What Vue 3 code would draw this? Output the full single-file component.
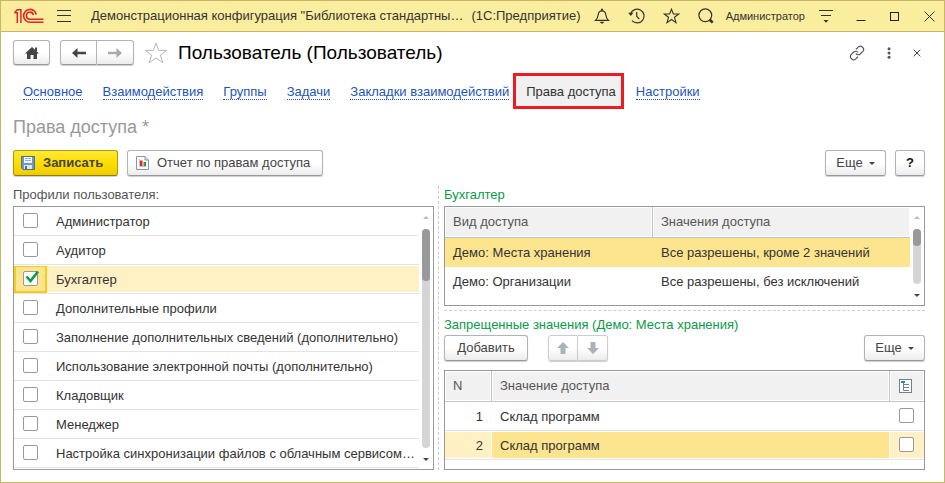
<script setup>
import { ref } from 'vue'

const links = ['Основное', 'Взаимодействия', 'Группы', 'Задачи', 'Закладки взаимодействий', 'Права доступа', 'Настройки']
const activeLink = ref('Права доступа')

const profiles = ref([
  { name: 'Администратор', on: false },
  { name: 'Аудитор', on: false },
  { name: 'Бухгалтер', on: true },
  { name: 'Дополнительные профили', on: false },
  { name: 'Заполнение дополнительных сведений (дополнительно)', on: false },
  { name: 'Использование электронной почты (дополнительно)', on: false },
  { name: 'Кладовщик', on: false },
  { name: 'Менеджер', on: false },
  { name: 'Настройка синхронизации файлов с облачным сервисом…', on: false },
])
const currentProfile = ref(2)

const kinds = [
  { kind: 'Демо: Места хранения', value: 'Все разрешены, кроме 2 значений' },
  { kind: 'Демо: Организации', value: 'Все разрешены, без исключений' },
]
const currentKind = ref(0)

const values = ref([
  { name: 'Склад программ', nested: false },
  { name: 'Склад программ', nested: false },
])
const currentValue = ref(1)
</script>

<template>
  <div class="window">
    <header class="titlebar">
      <svg class="logo" width="30" height="16" viewBox="0 0 30 16" fill="none" stroke="#e0242b">
        <path d="M.3 4.800H3.300V15M.8 4.300L3.300 1.800H6.900V15" stroke-width="1.500" />
        <path d="M22.300 6.500A6.400 6.400 0 1 0 16 14.200H29.500" stroke-width="1.600" />
        <path d="M19.300 7A3.500 3.500 0 1 0 16 11.200H29.500" stroke-width="1.600" />
      </svg>
      <button class="tool menu" aria-label="Меню">
        <svg width="14" height="12" viewBox="0 0 14 12" stroke="#333"><path d="M0 .5H14M0 5.500H14M0 11.500H14" /></svg>
      </button>
      <div class="caption"><span>Демонстрационная конфигурация "Библиотека стандартны…</span><span>(1С:Предприятие)</span></div>
      <div class="tools">
        <button class="tool" aria-label="Оповещения">
          <svg width="16" height="16" viewBox="0 0 16 16" fill="none" stroke="#333" stroke-width="1.200"><path d="M1.500 12.400C3.500 10.500 4 9 4.200 6.800C4.400 4.200 5.600 2.800 8 2.800S11.600 4.200 11.800 6.800C12 9 12.500 10.500 14.500 12.400Z" /><path d="M8 .8V2.800" stroke-width="2" /><path d="M5.500 13.800H10.500L8 16Z" fill="#333" stroke="none" /></svg>
        </button>
        <button class="tool" aria-label="История">
          <svg width="17" height="16" viewBox="0 0 17 16" fill="none" stroke="#333" stroke-width="1.200"><path d="M2.600 5.800A6.900 6.900 0 1 1 4 12.600" /><path d="M8.700 4V8.300L11.300 11" /><path d="M.2 4.800H5.400L2.800 8Z" fill="#333" stroke="none" /></svg>
        </button>
        <button class="tool" aria-label="Избранное">
          <svg width="17" height="16" viewBox="0 0 17 16" fill="none" stroke="#333" stroke-width="1.100"><path d="M8.500 1.200L10.400 6H15.700L11.500 9.300L13 14.600L8.500 11.500L4 14.600L5.500 9.300L1.300 6H6.600Z" /></svg>
        </button>
        <button class="tool" aria-label="Поиск">
          <svg width="16" height="16" viewBox="0 0 16 16" fill="none" stroke="#333" stroke-width="1.200"><circle cx="7.300" cy="7.300" r="6.400" /><path d="M11.500 11.500L14.700 14.700" stroke-width="2.600" /></svg>
        </button>
      </div>
      <span class="user">Администратор</span>
      <button class="tool service" aria-label="Сервис">
        <svg width="14" height="13" viewBox="0 0 14 13" stroke="#333" fill="none"><path d="M0 .5H14M2 5.500H12" stroke-width="1.200" /><path d="M4.500 10H9.500L7 12.700Z" fill="#333" stroke="none" /></svg>
      </button>
      <div class="system">
        <button class="tool" aria-label="Свернуть"><svg width="10" height="10" viewBox="0 0 10 10" stroke="#222"><path d="M.5 9.500H9.500" /></svg></button>
        <button class="tool" aria-label="Развернуть"><svg width="10" height="10" viewBox="0 0 10 10" stroke="#222" fill="none"><rect x=".5" y="1.500" width="8" height="8" /></svg></button>
        <button class="tool" aria-label="Закрыть"><svg width="11" height="11" viewBox="0 0 11 11" stroke="#333"><path d="M.5 .5L10.500 10.500M10.500 .5L.5 10.500" /></svg></button>
      </div>
    </header>

    <main class="form">
      <div class="head">
        <button class="btn home" aria-label="Домой">
          <svg width="16" height="14" viewBox="0 0 16 14" fill="#444"><path d="M8 1L15 7.500H13V13H9.500V9H6.500V13H3V7.500H1Z" /><path d="M11 1.500H13V5H11Z" /></svg>
        </button>
        <div class="pair">
          <button class="btn" aria-label="Назад"><svg width="14" height="12" viewBox="0 0 14 12" fill="#444"><path d="M0 6L5.500 1V4.700H14V7.300H5.500V11Z" /></svg></button>
          <button class="btn" aria-label="Вперед"><svg width="14" height="12" viewBox="0 0 14 12" fill="#aaa"><path d="M14 6L8.500 1V4.700H0V7.300H8.500V11Z" /></svg></button>
        </div>
        <button class="tool star" aria-label="В избранное">
          <svg width="24" height="22" viewBox="0 0 24 22" fill="none" stroke="#b4b8bc"><path d="M12 1.200L14.700 8.400H22.700L16.400 13L18.800 20.700L12 16L5.200 20.700L7.600 13L1.300 8.400H9.300Z" /></svg>
        </button>
        <h1>Пользователь (Пользователь)</h1>
        <div class="head-tools">
          <button class="tool" aria-label="Ссылка"><svg width="16" height="16" viewBox="0 0 16 16" fill="none" stroke="#555" stroke-width="1.200"><path d="M7 4.300L9.500 1.900C12 -.3 16.300 3.600 13.900 6.300L11.200 9C9.800 10.300 7.800 9.800 6.800 8.600" /><path d="M9 11.700L6.500 14.100C4 16.300 -.3 12.400 2.100 9.700L4.800 7C6.200 5.700 8.200 6.200 9.200 7.400" /></svg></button>
          <button class="tool" aria-label="Действия"><svg width="4" height="12" viewBox="0 0 4 12" fill="#555"><circle cx="2" cy="1.700" r="1.500" /><circle cx="2" cy="6" r="1.500" /><circle cx="2" cy="10.300" r="1.500" /></svg></button>
          <button class="tool" aria-label="Закрыть форму"><svg width="8" height="8" viewBox="0 0 8 8" stroke="#444"><path d="M.7 .7L7.300 7.300M7.300 .7L.7 7.300" /></svg></button>
        </div>
      </div>

      <nav class="links">
        <a v-for="l in links" :key="l" href="#" :class="{ active: l === activeLink }" @click.prevent="activeLink = l"><span>{{ l }}</span></a>
      </nav>

      <h2>Права доступа *</h2>

      <div class="commands">
        <button class="btn save">
          <svg width="14" height="14" viewBox="0 0 14 14"><path d="M.5 .5H13.500V13.500H2L.5 12Z" fill="#6d97c6" stroke="#4a6f98" /><path d="M3 1H11V7H3Z" fill="#f4f8fc" /><path d="M4 2.500H10M4 4.500H10" stroke="#9ab2ca" /><path d="M3 9H11V13H3Z" fill="#dfe8f0" /><path d="M4 10H6V13H4Z" fill="#4a6f98" /></svg>
          <span>Записать</span>
        </button>
        <button class="btn report">
          <svg width="13" height="14" viewBox="0 0 13 14"><path d="M.5 .5H9L12.500 4V13.500H.5Z" fill="#fff" stroke="#8296a6" /><path d="M9 .5V4H12.500" fill="#dfe6eb" stroke="#8296a6" /><path d="M3.500 3V10.500H10.500" stroke="#b8c3cb" fill="none" /><path d="M4 4.500H6.500V10H4Z" fill="#e22" /><path d="M7.500 6H10V10H7.500Z" fill="#26a03c" /></svg>
          <span>Отчет по правам доступа</span>
        </button>
        <button class="btn more">Еще<i class="caret"></i></button>
        <button class="btn help">?</button>
      </div>

      <div class="columns">
        <section class="left">
          <h3 class="plain">Профили пользователя:</h3>
          <div class="box">
            <table class="profiles">
              <tbody>
                <tr v-for="(p, i) in profiles" :key="p.name" :class="{ current: i === currentProfile }" @click="currentProfile = i">
                  <td class="tick">
                    <span class="check">
                      <input :id="'profile' + i" v-model="p.on" type="checkbox">
                      <svg v-if="p.on" width="15" height="14" viewBox="0 0 15 14" fill="none" stroke="#0a9a48" stroke-width="2.600"><path d="M1.500 6.500L5.500 11L13 1.500" /></svg>
                    </span>
                  </td>
                  <td><label :for="'profile' + i">{{ p.name }}</label></td>
                </tr>
              </tbody>
            </table>
            <div class="scroll long"><i class="up"></i><div class="track"><div class="thumb"></div></div><i class="down"></i></div>
          </div>
        </section>

        <section class="right">
          <h3>Бухгалтер</h3>
          <div class="box kinds-box">
            <table class="grid kinds">
              <thead><tr><th>Вид доступа</th><th>Значения доступа</th></tr></thead>
              <tbody>
                <tr v-for="(k, i) in kinds" :key="k.kind" :class="{ current: i === currentKind }" @click="currentKind = i">
                  <td>{{ k.kind }}</td><td>{{ k.value }}</td>
                </tr>
              </tbody>
            </table>
            <div class="scroll short"><i class="up"></i><div class="track"><div class="thumb"></div></div><i class="down"></i></div>
          </div>

          <div class="denied">
            <h3>Запрещенные значения (Демо: Места хранения)</h3>
            <div class="commands sub">
              <button class="btn add">Добавить</button>
              <div class="pair dim">
                <button class="btn" aria-label="Вверх"><svg width="12" height="12" viewBox="0 0 12 12" fill="#a9b4ba"><path d="M6 0L12 6H8.500V12H3.500V6H0Z" /></svg></button>
                <button class="btn" aria-label="Вниз"><svg width="12" height="12" viewBox="0 0 12 12" fill="#a9b4ba"><path d="M6 12L12 6H8.500V0H3.500V6H0Z" /></svg></button>
              </div>
              <button class="btn more">Еще<i class="caret"></i></button>
            </div>
            <div class="box">
              <table class="grid values">
                <thead>
                  <tr>
                    <th>N</th><th>Значение доступа</th>
                    <th aria-label="Включая подчиненные"><svg width="13" height="14" viewBox="0 0 13 14" fill="none"><rect x=".5" y=".5" width="12" height="13" fill="#fff" stroke="#70808c" /><path d="M2 2H6V4H2Z" fill="#2f86c6" /><path d="M4.500 4V11.500H10M4.500 8.500H10M4.500 5.500H10" stroke="#70808c" /></svg></th>
                  </tr>
                </thead>
                <tbody>
                  <tr v-for="(v, i) in values" :key="i" :class="{ current: i === currentValue }" @click="currentValue = i">
                    <td>{{ i + 1 }}</td><td>{{ v.name }}</td>
                    <td><span class="check"><input v-model="v.nested" type="checkbox" :aria-label="'Включая подчиненные, строка ' + (i + 1)"></span></td>
                  </tr>
                </tbody>
              </table>
            </div>
          </div>
        </section>
      </div>
    </main>
  </div>
</template>

<style>
body {
  margin: 0;
  background: #fff;
}
</style>

<style scoped>
* {
  box-sizing: border-box;
}
.window {
  min-height: 100vh;
  border: 1px solid #c9b765;
  background: #fff;
  color: #333;
  font: 13px/16px "Liberation Sans", Arial, sans-serif;
}
button {
  font: inherit;
  color: #444;
}
svg {
  display: block;
  flex: none;
}
h1, h2, h3 {
  margin: 0;
  font-weight: normal;
}

/* Title bar */
.titlebar {
  display: flex;
  align-items: center;
  height: 31px;
  padding: 0 9px 0 13px;
  border-bottom: 1px solid #c9b765;
  background: #fbed9e;
}
.tool {
  display: flex;
  align-items: center;
  justify-content: center;
  padding: 0;
  border: 0;
  background: none;
}
.menu {
  margin: 0 20px 0 13px;
}
.caption {
  display: flex;
  flex: 1;
  gap: 8px;
  white-space: nowrap;
  overflow: hidden;
}
.tools {
  display: flex;
  gap: 18px;
}
.user {
  margin: 0 14px 0 12px;
  font-size: 11px;
}
.service {
  margin-right: 23px;
}
.system {
  display: flex;
  gap: 24px;
}

/* Form header */
.form {
  padding: 8px 19px 12px 12px;
}
.head {
  display: flex;
  align-items: center;
  height: 25px;
}
.btn {
  display: flex;
  align-items: center;
  justify-content: center;
  height: 26px;
  padding: 0;
  border: 1px solid #b3b3b3;
  border-bottom-color: #999;
  border-radius: 3px;
  background: linear-gradient(#fff 50%, #ececec);
  box-shadow: 0 1px 1px #ccc;
  white-space: nowrap;
}
.head .btn {
  height: 25px;
}
.home {
  width: 37px;
  margin-right: 10px;
}
.pair {
  display: flex;
}
.pair .btn {
  width: 37px;
}
.pair .btn:first-child {
  border-radius: 3px 0 0 3px;
}
.pair .btn:last-child {
  border-left: 0;
  border-radius: 0 3px 3px 0;
}
.star {
  margin: 0 10px;
}
h1 {
  color: #000;
  font-size: 19px;
  line-height: 24px;
}
.head-tools {
  display: flex;
  align-items: center;
  gap: 22px;
  margin-left: auto;
  padding-right: 4px;
}

/* Navigation links */
.links {
  display: flex;
  align-items: center;
  height: 36px;
  margin-top: 8px;
  white-space: nowrap;
}
.links a {
  padding: 2px 10px 0;
  color: #1d55b8;
  text-decoration: none;
}
.links a span {
  display: block;
  line-height: 14px;
  border-bottom: 1px dotted #1d55b8;
}
.links a.active {
  display: flex;
  align-items: center;
  height: 36px;
  margin-left: -6px;
  margin-right: 2px;
  padding: 2px 5px 0 10px;
  border: 3px solid #ed1c24;
  background: #f0f0f0;
  color: #333;
}
.links a.active span {
  border-bottom-color: transparent;
}
h2 {
  margin-top: 6px;
  color: #999;
  font-size: 18px;
  line-height: 24px;
}

/* Command bars */
.commands {
  display: flex;
  gap: 9px;
  margin-top: 11px;
}
.save, .report {
  gap: 8px;
  justify-content: flex-start;
}
.save {
  width: 105px;
  padding-left: 7px;
  border-color: #b39b00;
  border-bottom-color: #8f7c00;
  background: linear-gradient(#ffe93b, #ffde00 50%, #efcc00);
  font-weight: bold;
}
.report {
  width: 196px;
  padding-left: 8px;
}
.more {
  width: 61px;
  gap: 6px;
  margin-left: auto;
}
.caret {
  border: 3px solid transparent;
  border-top-color: #444;
  border-bottom: 0;
}
.help {
  width: 30px;
  color: #111;
  font-weight: bold;
}

/* Columns */
.columns {
  display: grid;
  grid-template-columns: 421fr 481fr;
  gap: 10px;
  margin-top: 10px;
}
.left, .right {
  position: relative;
  min-width: 0;
  display: flex;
  flex-direction: column;
}
.left::after {
  content: "";
  position: absolute;
  top: 0;
  right: -5px;
  bottom: 0;
  border-right: 1px dashed #ccc;
}
h3 {
  height: 20px;
  color: #0a9a48;
  font-size: 13px;
  line-height: 18px;
}
h3.plain {
  color: #555;
}
.box {
  display: flex;
  border: 1px solid #999;
  background: #fff;
}
.left .box {
  height: 264px;
}
.kinds-box, .denied .box {
  height: 100px;
}
table {
  flex: 1;
  align-self: flex-start;
  min-width: 0;
  table-layout: fixed;
  width: 100%;
  border-collapse: separate;
  border-spacing: 0;
}
td, th {
  padding: 0;
  height: 29px;
  font-weight: normal;
  text-align: left;
  white-space: nowrap;
  overflow: hidden;
  border-bottom: 1px solid #e3e3e3;
}
.profiles td {
  padding-top: 1px;
  padding-left: 9px;
}
.profiles .tick {
  width: 33px;
  padding-top: 0;
  padding-bottom: 1px;
}
.profiles .current td {
  background: #fff1c4;
  background-clip: padding-box;
  box-shadow: inset 0 1px #fff, inset 0 -1px #fff;
}
.profiles .current .tick {
  background: #fde48f;
  box-shadow: inset 0 1px #fff, inset 0 0 0 2px #fbc91b;
}
.check {
  position: relative;
  display: block;
  width: 15px;
  height: 15px;
}
.check input {
  display: block;
  appearance: none;
  width: 15px;
  height: 15px;
  margin: 0;
  border: 1px solid #999;
  border-radius: 2px;
  background: #fff;
}
.check svg {
  position: absolute;
  left: 2px;
  top: -1px;
}

/* Tables with a header */
.grid th {
  height: 31px;
  padding-left: 8px;
  border-bottom: 1px solid #c4c4c4;
  border-right: 1px solid #c4c4c4;
  background: #f1f1f1;
  box-shadow: inset 0 0 0 1px #fff;
  color: #555;
}
.grid th:last-child {
  border-right: 0;
}
.grid td {
  padding-left: 8px;
  border-right: 1px solid #fff;
}
.grid td:last-child {
  border-right: 0;
}
.kinds th:first-child {
  width: 208px;
}
.kinds td {
  border-bottom: 0;
  border-right: 0;
}
.grid .current td {
  background: #fde48f;
}
.values th:first-child {
  width: 47px;
}
.values th:last-child {
  width: 34px;
}
.values td {
  padding-top: 1px;
}
.values td:first-child {
  padding: 1px 8px 0 0;
  text-align: right;
}
.values th:last-child, .values td:last-child {
  padding: 0 0 1px 9px;
}
.values .current td {
  background-clip: padding-box;
  box-shadow: inset 0 1px #fff, inset 0 -1px #fff;
}
.values .current td:first-child, .values .current td:last-child {
  background-color: #fff1c4;
}
.denied {
  margin-top: 4px;
  padding-top: 6px;
  border-top: 1px dashed #ccc;
}
.denied h3 {
  height: 18px;
  line-height: 16px;
}
.sub {
  margin: 0 0 9px;
}
.add {
  width: 84px;
  margin-right: 11px;
}
.dim .btn {
  width: 30px;
  border-color: #ccc;
}

/* Scroll bars */
.scroll {
  display: flex;
  flex: none;
  flex-direction: column;
  align-items: center;
  width: 14px;
  padding: 9px 0 8px;
}
.up, .down {
  border: 3px solid transparent;
}
.up {
  border-top: 0;
  border-bottom-color: #bbb;
}
.down {
  border-bottom: 0;
  border-top-color: #444;
}
.track {
  flex: 1;
  width: 8px;
  margin: 10px 0;
  border-radius: 4px;
  background: #d5d5d5;
}
.thumb {
  height: 52px;
  border-radius: 4px;
  background: #999;
}
.short .thumb {
  height: 17px;
}
</style>
